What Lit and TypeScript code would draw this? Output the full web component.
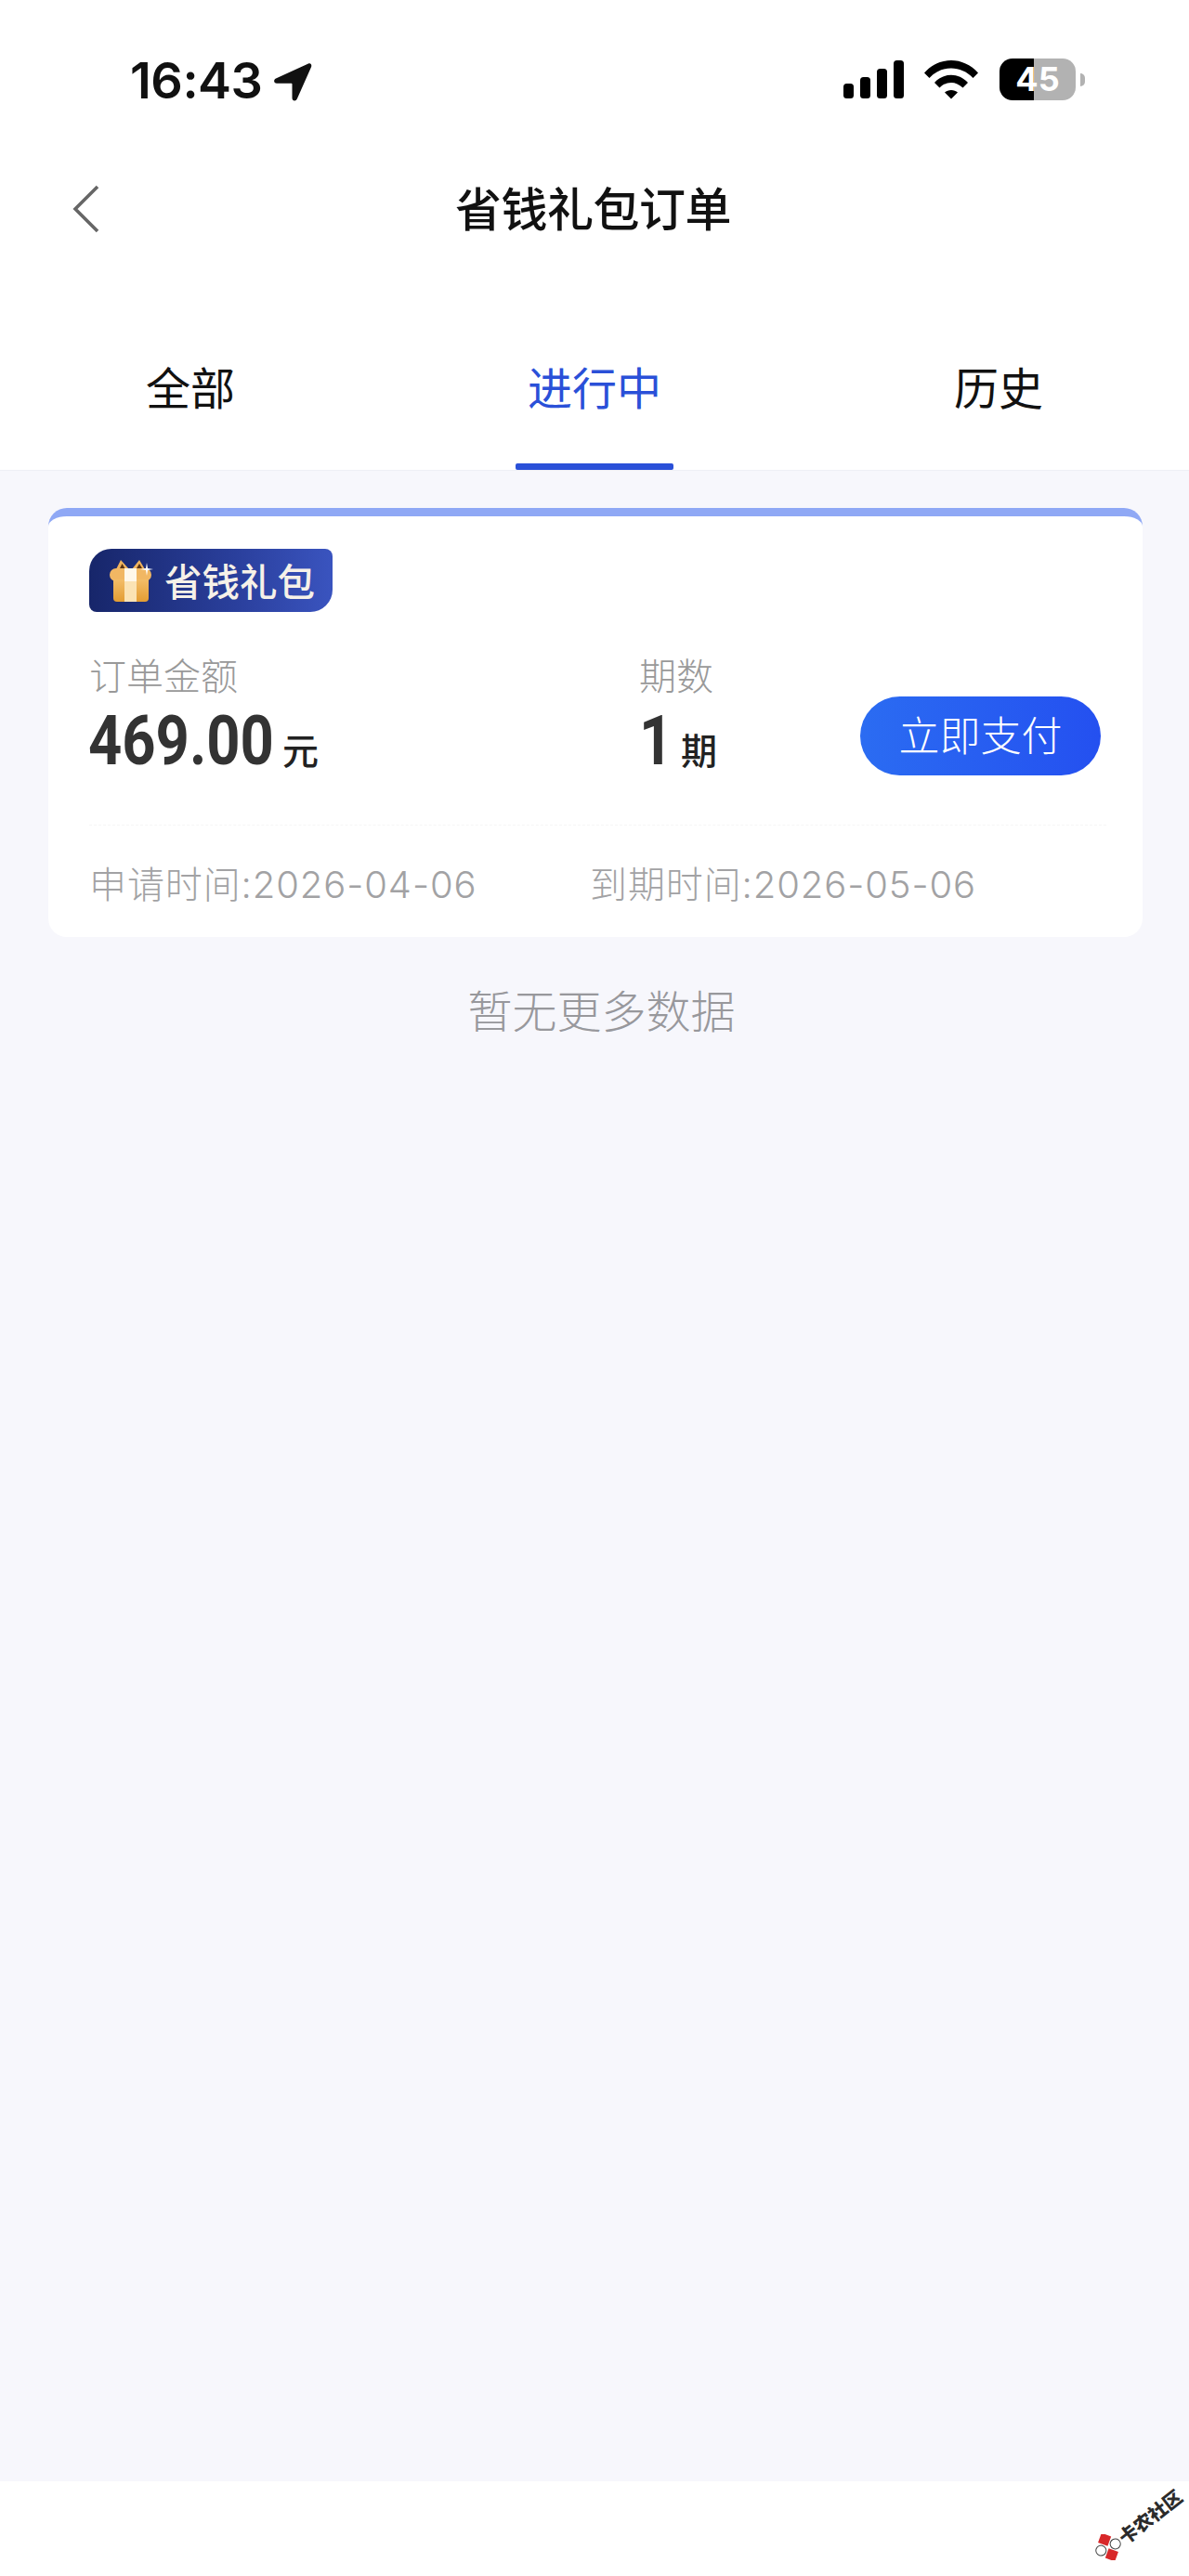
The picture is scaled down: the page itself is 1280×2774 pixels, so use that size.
import { LitElement, html, css } from "lit";
import { customElement } from "lit/decorators.js";

@customElement("app-root")
export class AppRoot extends LitElement {
  static styles = css`
    :host {
      display: block;
      width: 1280px;
      height: 2774px;
      font-family: "Noto Sans CJK SC", sans-serif;
      background: #fff;
      color: #111;
    }
    * { box-sizing: border-box; }
    .page { display: flex; flex-direction: column; height: 100%; }
    .status {
      height: 172px;
      display: flex;
      align-items: flex-start;
      padding: 63px 0 0 140px;
    }
    .time {
      font-family: Inter, sans-serif;
      font-weight: 600;
      font-size: 54px;
      line-height: 48px;
      height: 48px;
      color: #111;
      letter-spacing: -0.5px;
    }
    .arrow { margin: 4px 0 0 12px; display: block; }
    .status-right { margin-left: auto; display: flex; align-items: flex-start; padding-right: 112px; }
    .signal { display: block; margin: 2px 22px 0 0; }
    .wifi { display: block; margin: 2px 23px 0 0; }
    .battery { display: flex; align-items: center; gap: 5px; }
    .batt-body {
      width: 82px;
      height: 45px;
      border-radius: 14px;
      background: linear-gradient(90deg, #000 0, #000 37px, #b2b2b2 37px, #b2b2b2 100%);
      color: #fff;
      font-family: Inter, sans-serif;
      font-weight: 700;
      font-size: 36px;
      line-height: 45px;
      text-align: center;
    }
    .batt-nub { width: 5px; height: 14px; border-radius: 0 5px 5px 0; background: #b2b2b2; }

    .nav {
      height: 106px;
      display: grid;
      grid-template-columns: 1fr auto 1fr;
      align-items: center;
      padding-right: 3px;
    }
    .back { display: block; margin-left: 77px; }
    .title { font-size: 50px; font-weight: 500; line-height: 60px; color: #111; letter-spacing: -0.5px; margin-bottom: 6px; }

    .tabs {
      height: 228px;
      display: flex;
      justify-content: space-between;
      padding: 109px 157px 0 157px;
      background: #fff;
    }
    .tab {
      position: relative;
      font-size: 48px;
      line-height: 56px;
      height: 56px;
      color: #111;
    }
    .tab.active { color: #2a50d8; }
    .tab.active::after {
      content: "";
      position: absolute;
      left: 50%;
      top: 112px;
      width: 170px;
      height: 7px;
      margin-left: -85px;
      border-radius: 2px;
      background: #2a50d8;
    }

    main {
      flex: 1;
      background: #f7f7fc;
      border-top: 1px solid #eeeff5;
      padding: 40px 50px 0 52px;
    }
    .card {
      background: #fff;
      border-top: 9px solid #8fa8f5;
      border-radius: 20px;
      height: 462px;
      padding: 35px 45px 0 44px;
      display: flex;
      flex-direction: column;
    }
    .badge {
      align-self: flex-start;
      width: 262px;
      height: 68px;
      display: flex;
      align-items: center;
      padding-left: 22px;
      gap: 11px;
      border-radius: 24px 8px 24px 8px;
      background: linear-gradient(90deg, #17266a 0%, #2a3f9c 60%, #3a54bf 100%);
      color: #f6f1e8;
      font-size: 40.5px;
      font-weight: 500;
      line-height: 48px;
    }
    .gift { display: block; flex: none; }
    .row { display: flex; align-items: flex-end; margin-top: 43px; }
    .col1 { width: 592px; }
    .col2 { flex: 1; }
    .label { font-size: 40px; font-weight: 300; line-height: 48px; color: #999; }
    .value { height: 85px; display: flex; align-items: baseline; color: #333; line-height: 96px; }
    .num {
      font-family: Roboto, sans-serif;
      font-weight: 700;
      font-size: 74px;
      display: inline-block;
      transform: scaleX(0.855);
      transform-origin: left;
    }
    .n1 { width: 197px; margin-left: -1px; }
    .n2 { width: 33px; }
    .unit { font-size: 39px; font-weight: 500; margin-left: 12px; color: #222; }
    .pay {
      width: 259px;
      height: 85px;
      border-radius: 43px;
      background: linear-gradient(90deg, #2b6cf2, #2450f0);
      color: #fff;
      font-size: 44px;
      font-weight: 300;
      line-height: 80px;
      text-align: center;
      flex: none;
    }
    .divider { margin-top: 53px; border-top: 1px dashed #f6f6f6; margin-right: -6px; }
    .dates {
      display: flex;
      margin-top: 36px;
      font-family: Inter, "Noto Sans CJK SC", sans-serif;
      font-size: 40px;
      line-height: 56px;
      color: #a2a2a4;
      font-weight: 300;
    }
    .d1 { width: 539px; letter-spacing: 0.9px; }
    .d2 { letter-spacing: 0.9px; }
    .empty {
      margin-top: 49px;
      text-align: center;
      font-size: 48px;
      font-weight: 300;
      line-height: 56px;
      color: #98989c;
      padding-left: 13px;
    }
    footer { position: relative; height: 102px; background: #fff; flex: none; }
    .mark {
      position: absolute;
      left: 1179px;
      top: 57px;
      display: block;
    }
    .mark-text {
      position: absolute;
      left: 1198px;
      top: 26px;
      font-size: 20px;
      line-height: 24px;
      font-weight: 900;
      color: #2b2b2b;
      white-space: nowrap;
      transform: rotate(-38deg);
    }
  `;

  render() {
    return html`
      <div class="page">
        <div class="status">
          <span class="time">16:43</span>
          <svg class="arrow" width="42" height="42" viewBox="0 0 42 42">
            <path d="M38 1.500 3 17.500c-3 1.400-2.200 5.200 1 5.200h15.500c.6 0 1 .4 1 1V38.500c0 3.400 4 4 5.300 1L41 5.200C42 2.600 40.400.5 38 1.500Z" fill="#111"/>
          </svg>
          <div class="status-right">
            <svg class="signal" width="65" height="41" viewBox="0 0 65 41">
              <rect x="0" y="25" width="11" height="16" rx="3.500" fill="#000"/>
              <rect x="18" y="18" width="11" height="23" rx="3.500" fill="#000"/>
              <rect x="36" y="9" width="11" height="32" rx="3.500" fill="#000"/>
              <rect x="54" y="0" width="11" height="41" rx="3.500" fill="#000"/>
            </svg>
            <svg class="wifi" width="58" height="42" viewBox="0 0 58 42">
              <path d="M0 13.500C16-4.500 42-4.500 58 13.500L52.500 19C39.500 5 18.500 5 5.500 19Z" fill="#000"/>
              <path d="M11 24C21 13 37 13 47 24L41.500 29.500C34 22 24 22 16.500 29.500Z" fill="#000"/>
              <path d="M22 34.500C25.500 31 32.500 31 36 34.500L29 41.500Z" fill="#000"/>
            </svg>
            <div class="battery">
              <div class="batt-body">45</div>
              <div class="batt-nub"></div>
            </div>
          </div>
        </div>

        <div class="nav">
          <svg class="back" width="32" height="52" viewBox="0 0 32 52">
            <polyline points="28,2 4,26 28,50" fill="none" stroke="#666" stroke-width="3.600"/>
          </svg>
          <div class="title">省钱礼包订单</div>
          <div></div>
        </div>

        <div class="tabs">
          <div class="tab">全部</div>
          <div class="tab active">进行中</div>
          <div class="tab">历史</div>
        </div>

        <main>
          <div class="card">
            <div class="badge">
              <svg class="gift" width="48" height="48" viewBox="0 0 48 48">
                <defs>
                  <linearGradient id="g" x1="0" y1="0" x2="0" y2="1">
                    <stop offset="0" stop-color="#f3bd68"/>
                    <stop offset="1" stop-color="#e39d33"/>
                  </linearGradient>
                </defs>
                <path d="M7 12 12 2 21 12ZM24 12 32 2 38 12Z" fill="#f0b45e"/>
                <path d="M11 11 13.500 6 16.500 11ZM29 11 32 6 35 11Z" fill="#5a3516"/>
                <rect x="0" y="11" width="45" height="14" rx="7" fill="#f1b763"/>
                <path d="M4 23H42V43a4 4 0 0 1-4 4H8a4 4 0 0 1-4-4Z" fill="url(#g)"/>
                <rect x="16" y="11" width="13" height="14" fill="#fff8ea"/>
                <rect x="16" y="25" width="13" height="22" fill="#fbe3b4"/>
                <path d="M40 5 41 11 47 12 41 13 40 19 39 13 33 12 39 11Z" fill="#fff"/>
              </svg>
              <span>省钱礼包</span>
            </div>

            <div class="row">
              <div class="col1">
                <div class="label">订单金额</div>
                <div class="value"><span class="num n1">469.00</span><span class="unit">元</span></div>
              </div>
              <div class="col2">
                <div class="label">期数</div>
                <div class="value"><span class="num n2">1</span><span class="unit">期</span></div>
              </div>
              <div class="pay">立即支付</div>
            </div>

            <div class="divider"></div>

            <div class="dates">
              <span class="d1">申请时间:2026-04-06</span>
              <span class="d2">到期时间:2026-05-06</span>
            </div>
          </div>
          <div class="empty">暂无更多数据</div>
        </main>

        <footer>
          <svg class="mark" width="28" height="28" viewBox="0 0 28 28">
            <g transform="rotate(20 14 14)">
              <rect x="2" y="2" width="11" height="11" fill="#d8282a"/>
              <rect x="15" y="15" width="11" height="11" fill="#d8282a"/>
              <circle cx="20" cy="8" r="5.500" fill="#fff" stroke="#444" stroke-width="1"/>
              <circle cx="8" cy="20" r="5.500" fill="#fff" stroke="#444" stroke-width="1"/>
            </g>
          </svg>
          <div class="mark-text">卡农社区</div>
        </footer>
      </div>
    `;
  }
}
